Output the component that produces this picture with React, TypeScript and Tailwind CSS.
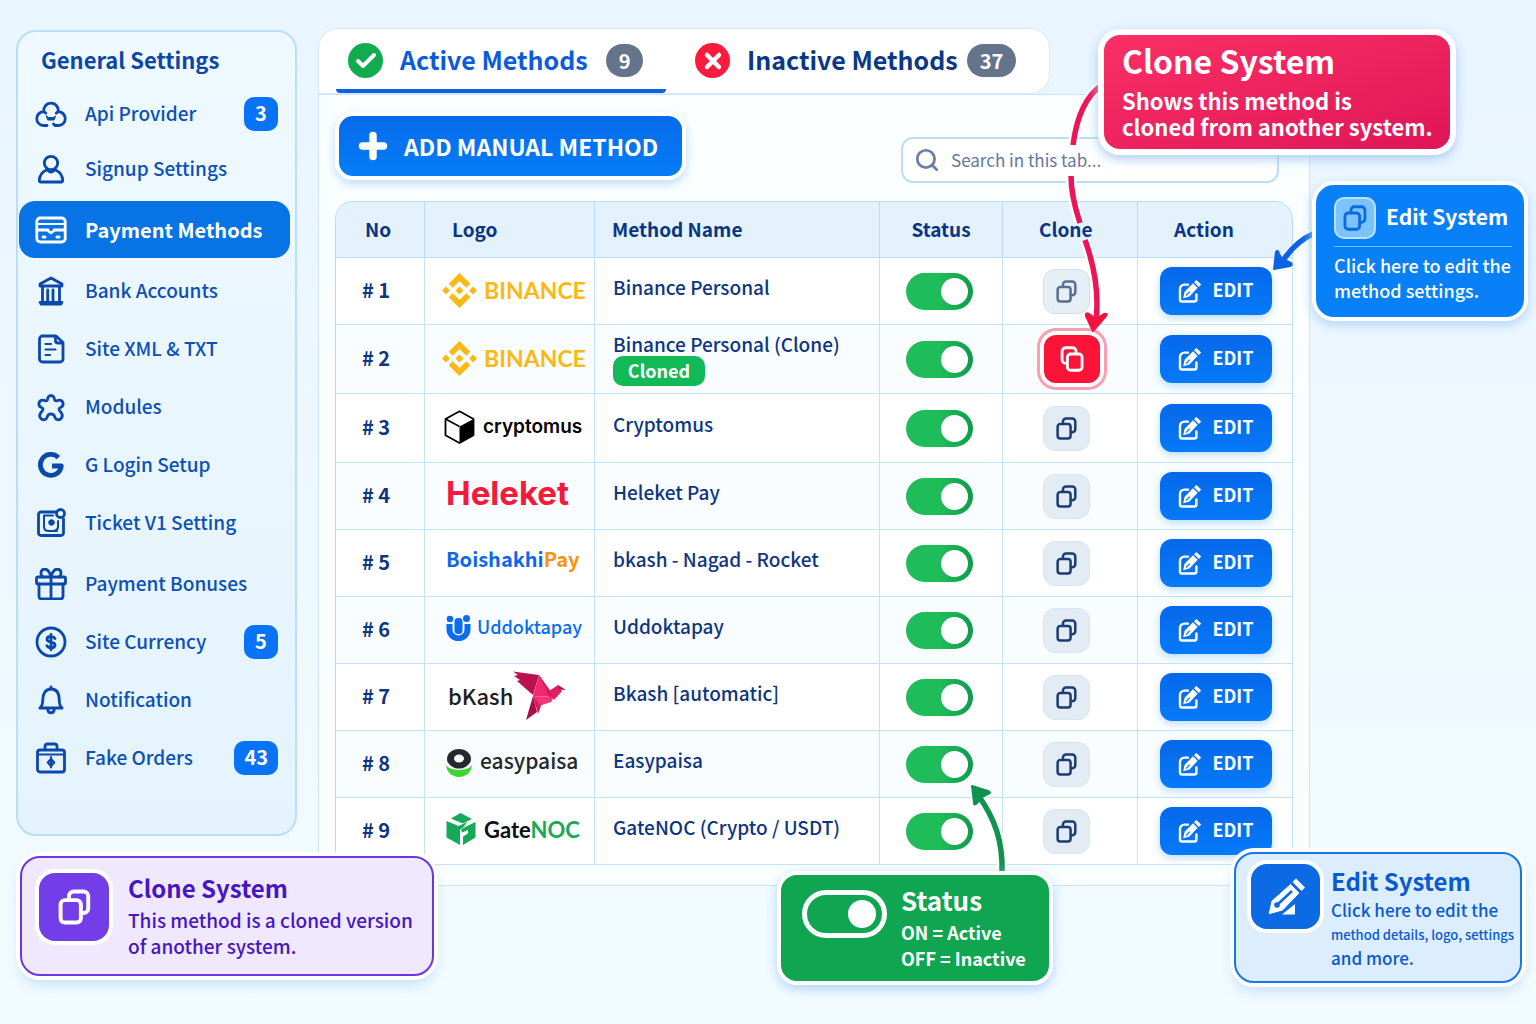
import type { ReactNode } from "react";
import { Search, Check, X, Plus } from "lucide-react";

function CloneIcon(props: { className?: string }) {
  return (
    <svg
      viewBox="0 0 20 22"
      fill="none"
      stroke="currentColor"
      strokeWidth={2.4}
      strokeLinecap="round"
      strokeLinejoin="round"
      className={props.className}
    >
      <rect x="1.5" y="6.8" width="12.4" height="13.7" rx="2.6" />
      <path d="M6.6 6.2V4.4a2.9 2.9 0 0 1 2.9-2.9h6a2.9 2.9 0 0 1 2.9 2.9v7.4a2.9 2.9 0 0 1-2.9 2.9h-1" />
    </svg>
  );
}

function EditIcon() {
  return (
    <svg viewBox="0 0 24 24" fill="none" className="h-6 w-6 shrink-0">
      <path
        d="M10 5.6H6.4A4.4 4.4 0 0 0 2 10v10.500a2 2 0 0 0 2 2h12.400a2 2 0 0 0 2-2v-5"
        stroke="currentColor"
        strokeWidth={2.4}
        strokeLinecap="round"
      />
      <path
        d="M5.200 19.200l1.400-6.400L15 4.300l4.700 4.500-8.200 8.600z"
        fill="currentColor"
      />
      <path d="M16 3.300l2.300-2.400 4.900 4.600-2.300 2.400z" fill="currentColor" />
      <path d="M8 16.600l3.800-3.900" stroke="#0a6ff0" strokeWidth={1.2} />
    </svg>
  );
}

function PencilIcon() {
  return (
    <svg viewBox="0 0 38 38" className="h-[38px] w-[38px]">
      <path d="M15 36.500L28 26v10.500z" fill="#fff" />
      <path
        d="M1 37l3-14L23.500 5.500l9.500 9.500-17.500 18z"
        fill="#fff"
        stroke="#0b6ae4"
        strokeWidth={1}
      />
      <path d="M25.500 4L29 .500 38 9.500l-3.500 3.500z" fill="#fff" />
      <path d="M11 26L25 13" stroke="#0b6ae4" strokeWidth={2.500} />
      <circle cx="10" cy="27" r="2.800" fill="#0b6ae4" />
    </svg>
  );
}

function Outline(props: { children: ReactNode }) {
  return (
    <svg
      viewBox="0 0 32 32"
      fill="none"
      stroke="currentColor"
      strokeWidth={2.800}
      strokeLinecap="round"
      strokeLinejoin="round"
      className="h-8 w-8"
    >
      {props.children}
    </svg>
  );
}

const icons: Record<string, ReactNode> = {
  api: (
    <Outline>
      <path d="M12 27.500H8.500a6.900 6.900 0 0 1 .3-13.800 7.300 7.300 0 1 1 14.400 0 6.900 6.900 0 0 1 .3 13.800H20l-1.500-1.500M8.800 13.700l2 1.500M23.200 13.700l-2 1.500" />
      <path d="M11.500 18l2 1.500h5l2-1.500-1.500 4h-6z" fill="currentColor" strokeWidth={1} />
    </Outline>
  ),
  user: (
    <Outline>
      <circle cx="16" cy="10" r="6.700" />
      <path d="M11.500 17C7 19 4.500 22.500 4.300 27.500a1.400 1.400 0 0 0 1.400 1.500h20.600a1.400 1.400 0 0 0 1.400-1.500C27.500 22.500 25 19 20.500 17M13 17.500c2 2 4 2 6 0" />
    </Outline>
  ),
  card: (
    <Outline>
      <rect x="1.800" y="4" width="28.400" height="24" rx="3.500" />
      <path d="M3 10h26" strokeWidth={1.800} />
      <path d="M3 16h9l4 3 4-3h9M8 16h5M19 16h5" />
      <path d="M8 23h2M22 23h2" strokeWidth={3} />
    </Outline>
  ),
  bank: (
    <Outline>
      <path d="M5 11v-2L16 3l11 6v2zM5 27.500h22M6 29h20M7.500 12v15M12.700 15v11M18 15v11M24.500 12v15" />
    </Outline>
  ),
  file: (
    <Outline>
      <path d="M7.500 3H21l7 6.500V26a3 3 0 0 1-3 3H7.500a3 3 0 0 1-3-3V6a3 3 0 0 1 3-3z" />
      <path d="M20.500 4v3.500a2.500 2.500 0 0 0 2.500 2.500h4" />
      <path d="M10.500 11h5.500M10.500 16.500h10M10.500 22H15" strokeWidth={2.200} />
    </Outline>
  ),
  puzzle: (
    <Outline>
      <path d="M12.500 8.500a3.500 4 0 1 1 7 0c0 1 .8 1.500 2 1.300l2.500-.6a3.700 3.700 0 0 1 2 7c-2 .8-2.500 1.800-1.500 3.300l2 2.700c2.300 3.500-1 7.500-4.600 6.300-1.600-.5-1.900-2-2.500-3.500-.6-1.400-2-2-3.400-2s-2.800.6-3.400 2c-.6 1.500-.9 3-2.500 3.500C6.500 29.700 3.200 25.700 5.500 22.200l2-2.700c1-1.500.5-2.500-1.500-3.300a3.700 3.700 0 0 1 2-7l2.500.6c1.200.2 2-.3 2-1.300z" />
    </Outline>
  ),
  google: (
    <svg viewBox="0 0 32 32" fill="none" className="h-8 w-8">
      <path
        d="M23.400 8.600A10.500 10.500 0 1 0 26.300 17H17"
        stroke="currentColor"
        strokeWidth={4.800}
        strokeLinejoin="round"
      />
    </svg>
  ),
  ticket: (
    <Outline>
      <path d="M21 5H6a2.500 2.500 0 0 0-2.500 2.500V26A2.500 2.500 0 0 0 6 28.500h20a2.500 2.500 0 0 0 2.500-2.500V12" />
      <path d="M18 8.500H9v11c0 3 2 4.500 5 4.500h8M23 14v6c0 2-1 3-3 3.500" strokeWidth={2} />
      <circle cx="16.500" cy="15.500" r="2.800" fill="currentColor" strokeWidth={1} />
      <circle cx="25.500" cy="6.500" r="4" />
    </Outline>
  ),
  gift: (
    <Outline>
      <rect x="1.500" y="9" width="29" height="7" rx="1.500" />
      <path d="M4 16v12.500A2.500 2.500 0 0 0 6.500 31h19a2.500 2.500 0 0 0 2.500-2.500V16M16 9v22" />
      <path d="M16 8.500C14.500 3.500 12 1 9.500 1a3.800 3.800 0 0 0-3.500 4c0 2 1 3.500 2 4M16 8.500C17.500 3.500 20 1 22.500 1A3.800 3.800 0 0 1 26 5c0 2-1 3.500-2 4" />
    </Outline>
  ),
  dollar: (
    <Outline>
      <circle cx="16" cy="16" r="14" />
      <path d="M20 12.500c-1-1.500-2.500-2-4-2-2.300 0-4 1-4 2.800 0 4 8 1.800 8 5.700 0 1.800-1.700 2.800-4 2.800-1.700 0-3.300-.6-4.200-2.200M16 8.300v15.500" />
    </Outline>
  ),
  bell: (
    <Outline>
      <path d="M4.800 24c2-1.500 2.900-3.500 2.900-7.500C7.700 9.500 10.500 5 16 5s8.300 4.500 8.300 11.500c0 4 .9 6 2.900 7.500z" />
      <path d="M16 3v1.500M12.800 25.500c.5 4.500 5.900 4.500 6.400 0" />
    </Outline>
  ),
  bag: (
    <Outline>
      <rect x="2.500" y="8" width="27" height="22" rx="2.500" />
      <path d="M10 7V4.500A2.500 2.500 0 0 1 12.500 2h7A2.500 2.500 0 0 1 22 4.500V7" />
      <path d="M3 12.500h26" strokeWidth={2.200} />
      <path d="M16 17l3.200 3.500L16 24l-3.200-3.500zM16 15v10.500" strokeWidth={2.200} />
    </Outline>
  ),
};

const menuGroups = [
  [
    { icon: "api", label: "Api Provider", badge: 3 },
    { icon: "user", label: "Signup Settings" },
  ],
  [{ icon: "card", label: "Payment Methods", active: true }],
  [
    { icon: "bank", label: "Bank Accounts" },
    { icon: "file", label: "Site XML & TXT" },
    { icon: "puzzle", label: "Modules" },
    { icon: "google", label: "G Login Setup" },
    { icon: "ticket", label: "Ticket V1 Setting" },
  ],
  [
    { icon: "gift", label: "Payment Bonuses" },
    { icon: "dollar", label: "Site Currency", badge: 5 },
    { icon: "bell", label: "Notification" },
    { icon: "bag", label: "Fake Orders", badge: 43 },
  ],
] as { icon: string; label: string; badge?: number; active?: boolean }[][];

function SidebarItem(props: any) {
  const { icon, label, badge, active } = props;

  return (
    <a
      href="#"
      className={
        active
          ? "mr-[5px] flex h-[57px] items-center rounded-2xl bg-[#0873e4] pl-4 pr-3 text-[20px] font-bold text-white"
          : "mr-[5px] flex h-[57px] items-center pl-4 pr-3 text-[19px] font-medium text-[#0b4fb8]"
      }
    >
      <span
        className={
          active
            ? "flex w-8 justify-center text-white"
            : "flex w-8 justify-center text-[#0a48ab]"
        }
      >
        {icons[icon]}
      </span>
      <span className="ml-[18px] flex-1 whitespace-nowrap">{label}</span>
      {badge && (
        <span className="flex h-[34px] min-w-[34px] items-center justify-center rounded-[10px] bg-[#0873f4] px-[10px] pb-[2px] text-[20px] font-bold text-white">
          {badge}
        </span>
      )}
    </a>
  );
}

function Sidebar() {
  return (
    <aside className="mt-[2px] w-[281px] shrink-0 self-start rounded-[20px] border-2 border-[#b9defa] bg-linear-to-b from-[#eff9ff] to-[#e4f3fd] pb-12">
      <h2 className="mt-[11px] ml-[23px] text-[22px] leading-8 font-bold text-[#0a47a9]">
        General Settings
      </h2>
      <nav className="mt-[10px] ml-px flex flex-col gap-1">
        {menuGroups.map((group, i) => (
          <div
            key={i}
            className={
              i === 0 ? "flex flex-col -space-y-[2px]" : "flex flex-col gap-px"
            }
          >
            {group.map((item) => (
              <SidebarItem key={item.label} {...item} />
            ))}
          </div>
        ))}
      </nav>
    </aside>
  );
}

function Binance() {
  return (
    <div className="flex items-center gap-[7px] pb-[2px]">
      <svg viewBox="0 0 126.600 126.600" fill="#fcb813" className="h-[35px] w-[35px]">
        <path d="M38.700 53.200L63.300 28.600 87.900 53.200 102.200 38.900 63.300 0 24.400 38.900zM0 63.300L14.300 49 28.600 63.300 14.300 77.600zM38.700 73.400L63.300 98 87.900 73.400 102.200 87.700 63.300 126.600 24.400 87.700zM98 63.300L112.300 49 126.600 63.300 112.300 77.600zM77.800 63.300L63.300 48.800 48.800 63.300 63.300 77.800z" />
      </svg>
      <span className="font-[Lato] text-[23px] font-bold text-[#fcb813]">
        BINANCE
      </span>
    </div>
  );
}

function Cryptomus() {
  return (
    <div className="flex items-center gap-2 pb-[2px] pl-[2px]">
      <svg viewBox="0 0 31 34" className="h-[34px] w-[31px]">
        <path
          d="M15.500 1.200L29.500 9v16.200L15.500 33 1.500 25.200V9z"
          fill="#fff"
          stroke="#000"
          strokeWidth={1.800}
          strokeLinejoin="round"
        />
        <path d="M15.500 16.500L29.500 9v16.200L15.500 33z" fill="#000" />
        <path d="M1.500 9l14 7.500" stroke="#000" strokeWidth={1.500} />
      </svg>
      <span className="font-[Inter] text-[19px] font-semibold text-black">
        cryptomus
      </span>
    </div>
  );
}

function Uddoktapay() {
  return (
    <div className="flex items-center gap-[6px] pl-1 pb-1">
      <svg viewBox="0 0 25 26" className="h-[26px] w-[25px]" fill="#0a6cf0">
        <circle cx="4" cy="4" r="3.300" />
        <circle cx="20.500" cy="3.500" r="3.500" />
        <path d="M.5 9h6v5.500a6 6 0 0 0 12 0V9h6v5.500a12 11.500 0 0 1-24 0z" />
        <rect x="8.500" y="3" width="8" height="16" rx="3.500" />
      </svg>
      <span className="pb-1 text-[18px] font-medium text-[#0a6cf0]">
        Uddoktapay
      </span>
    </div>
  );
}

function BkashLogo() {
  return (
    <div className="flex items-center pb-[2px] pl-[6px]">
      <span className="pb-[2px] text-[22px] text-[#1c1c22]">bKash</span>
      <svg viewBox="0 0 54 50" className="h-[50px] w-[54px]">
        <path d="M0 .5L26 4 20 24 4 10l3-1-6-4 4-1z" fill="#b9124e" />
        <path d="M26 4l-6 21 21 1z" fill="#f0286f" />
        <path d="M26 4l15 21-3 5z" fill="#d81b60" />
        <path d="M20 25l21 1-3 5-15 5z" fill="#f2357a" />
        <path d="M20 25l4 16-11 8z" fill="#a80f45" />
        <path d="M20 25l5 18 3-8z" fill="#d81b60" />
        <path d="M36 20l9-6 4 6-8 9z" fill="#e01f63" />
        <path d="M45 14l8 5-7-.500z" fill="#b9124e" />
      </svg>
    </div>
  );
}

function EasypaisaLogo() {
  return (
    <div className="flex items-center gap-2 pb-[2px] pl-1">
      <svg viewBox="0 0 26 28" className="h-7 w-[26px]">
        <path
          d="M13 0c7 0 12 4.500 12 10 0 1.500-.6 3-1.200 4H2.200C1.500 13 1 11.500 1 10 1 4.500 6 0 13 0z"
          fill="#25282d"
        />
        <path d="M2.500 14c2 3.500 6 5.500 10.500 5.500s8.500-2 10.500-5.500z" fill="#25282d" />
        <ellipse cx="13" cy="9.500" rx="5" ry="4" fill="#fff" />
        <path
          d="M0 16c4 6.500 22 6.500 26 0-.500 7-6 12-13 12S.500 23 0 16z"
          fill="#3ed62f"
        />
      </svg>
      <span className="pb-1 text-[21px] font-medium text-[#25282d]">
        easypaisa
      </span>
    </div>
  );
}

function GateNocLogo() {
  return (
    <div className="flex items-center gap-2 pl-1 pb-1">
      <svg viewBox="0 0 30 32" className="h-8 w-[30px]" fill="#16a957">
        <path d="M5 5.500L14.500 0 26 6l-9 4.500-4-1.500z" />
        <path d="M.500 8l12 5 9-4-5 6-2.500 1.500V32L.500 24.500z" />
        <path d="M29.500 9v15.500L17 32v-8.500l5-3V17l-6 2.500-1-3 5-3z" />
      </svg>
      <span className="font-[Lato] text-[22px] font-bold text-[#0c0f14]">
        Gate<span className="text-[#16a957]">NOC</span>
      </span>
    </div>
  );
}

const methods = [
  { logo: <Binance />, name: "Binance Personal" },
  { logo: <Binance />, name: "Binance Personal (Clone)", cloned: true },
  { logo: <Cryptomus />, name: "Cryptomus" },
  {
    logo: (
      <div className="pb-1 pl-1 font-[Inter] text-[33px] font-bold text-[#f5193a]">
        Heleket
      </div>
    ),
    name: "Heleket Pay",
  },
  {
    logo: (
      <div className="pb-2 pl-1 text-[20px] font-bold text-[#0d67ee]">
        Boishakhi<span className="text-[#fb9210]">Pay</span>
      </div>
    ),
    name: "bkash - Nagad - Rocket",
  },
  { logo: <Uddoktapay />, name: "Uddoktapay" },
  { logo: <BkashLogo />, name: "Bkash [automatic]" },
  { logo: <EasypaisaLogo />, name: "Easypaisa" },
  { logo: <GateNocLogo />, name: "GateNOC (Crypto / USDT)" },
];

function MethodRow(props: any) {
  const { no, logo, name, cloned } = props;
  const cell = "border-b border-r border-[#c3e3fa] p-0";

  return (
    <tr
      className={
        no === 2 || no === 3
          ? "h-[69px] odd:bg-white even:bg-[#f9fdff]"
          : "h-[67px] odd:bg-white even:bg-[#f9fdff]"
      }
    >
      <td className={cell + " pr-2 pb-[2px] text-center text-[20px] font-bold"}>
        # {no}
      </td>
      <td className={cell + " pl-[17px] whitespace-nowrap"}>{logo}</td>
      <td className={cell + " pl-[18px]"}>
        <div className={cloned ? "leading-6" : "pb-2"}>{name}</div>
        {cloned && (
          <span className="flex h-[30px] w-[92px] items-center justify-center rounded-[10px] bg-[#12b957] pb-[2px] text-[18px] font-bold text-white">
            Cloned
          </span>
        )}
      </td>
      <td className={cell + " pl-[26px]"}>
        <input
          type="checkbox"
          defaultChecked
          aria-label={"Status of " + name}
          className="block h-[37px] w-[67px] appearance-none rounded-full bg-linear-to-r from-[#1fbd5a] from-50% to-[#0f9a4c] before:ml-[35px] before:mt-[5px] before:block before:h-[27px] before:w-[27px] before:rounded-full before:bg-white before:content-['']"
        />
      </td>
      <td className={cell + " pl-10"}>
        {cloned ? (
          <button
            aria-label={"Clone " + name}
            className="-ml-[3px] flex h-14 w-16 items-center justify-center rounded-2xl border-4 border-white bg-[#fb1338] text-white shadow-[0_0_0_3px_#ff9db0]"
          >
            <CloneIcon className="h-[26px] w-6 -scale-x-100" />
          </button>
        ) : (
          <button
            aria-label={"Clone " + name}
            className={
              no === 1
                ? "flex h-[45px] w-[47px] items-center justify-center rounded-xl border border-[#cfdfee] bg-[#e6eef6] text-[#5b6f90]"
                : "flex h-[45px] w-[47px] items-center justify-center rounded-xl border border-[#d8e5f1] bg-[#e3ecf5] text-[#1c3d74]"
            }
          >
            <CloneIcon className="h-[23px] w-[21px]" />
          </button>
        )}
      </td>
      <td className={cell + " pl-[22px]"}>
        <button className="flex h-12 w-28 items-center justify-center gap-[10px] rounded-xl bg-linear-to-b from-[#0668ea] to-[#067af8] text-[18px] font-bold text-white shadow-[0_3px_8px_#b9dcfb]">
          <EditIcon />
          <span className="pb-[3px]">EDIT</span>
        </button>
      </td>
    </tr>
  );
}

function MethodsTable() {
  const head = "border-b border-r border-[#b9dcf8] p-0";

  return (
    <table className="mt-[18px] w-full table-fixed border-separate border-spacing-0 overflow-hidden rounded-t-[18px] border-t border-l border-[#b9dcf8] text-left text-[19px] font-medium text-[#0d3582]">
      <colgroup>
        <col className="w-[89px]" />
        <col className="w-[170px]" />
        <col />
        <col className="w-[123px]" />
        <col className="w-[135px]" />
        <col className="w-[155px]" />
      </colgroup>
      <thead>
        <tr className="h-14 bg-[#e3f2fd] text-[#0a3484]">
          <th className={head + " pr-1 text-center"}>No</th>
          <th className={head + " pl-[27px]"}>Logo</th>
          <th className={head + " pl-[17px]"}>Method Name</th>
          <th className={head + " text-center"}>Status</th>
          <th className={head + " pl-9"}>Clone</th>
          <th className={head + " rounded-tr-[18px] pl-9"}>Action</th>
        </tr>
      </thead>
      <tbody>
        {methods.map((method, i) => (
          <MethodRow key={method.name} no={i + 1} {...method} />
        ))}
      </tbody>
    </table>
  );
}

function Tabs() {
  return (
    <div className="flex h-[66px] w-[732px] max-w-full rounded-[20px] rounded-bl-none border border-[#d5eafb] bg-white pl-[17px]">
      <button className="flex w-[330px] items-center rounded-b-sm border-b-[4px] border-[#0b62e0] pt-[3px] pl-3 text-[25px] font-semibold text-[#0b5bdc]">
        <span className="flex h-[35px] w-[35px] items-center justify-center rounded-full bg-[#12ab50] text-white">
          <Check className="h-6 w-6" strokeWidth={4} />
        </span>
        <span className="ml-[17px] pb-[2px]">Active Methods</span>
        <span className="ml-[18px] rounded-full bg-[#64748b] px-[13px] text-[20px] leading-[33px] font-bold text-white">
          9
        </span>
      </button>
      <button className="ml-[29px] flex items-center border-b-[4px] border-transparent pt-[3px] text-[25px] font-semibold text-[#0b3885]">
        <span className="flex h-[35px] w-[35px] items-center justify-center rounded-full bg-[#fb1b3c] text-white">
          <X className="h-6 w-6" strokeWidth={4.500} />
        </span>
        <span className="ml-[17px] pb-[2px]">Inactive Methods</span>
        <span className="ml-[9px] rounded-full bg-[#64748b] px-[13px] text-[20px] leading-[33px] font-bold text-white">
          37
        </span>
      </button>
    </div>
  );
}

/* Callouts lie over the settings page */
function Callouts() {
  return (
    <>
      {/* Clone arrow, interrupted where it crosses text */}
      <svg
        viewBox="0 0 60 260"
        fill="none"
        className="pointer-events-none absolute top-[80px] right-[426px] h-[260px] w-[60px]"
      >
        <g stroke="#fff" strokeWidth={10}>
          <path d="M52 5C34 17 26 42 23 65" />
          <path d="M21 96c0 18 4 32 9 47M35 160c10 28 14 55 11 80" />
        </g>
        <g stroke="#ec1558" strokeWidth={5.500}>
          <path d="M52 5C34 17 26 42 23 65" />
          <path d="M21 96c0 18 4 32 9 47M35 160c10 28 14 55 11 80" />
        </g>
        <path
          d="M43 251l-7-15q-1-4 3-2l7 5 8-5q4-1 2 2z"
          fill="#f5123f"
          stroke="#f5123f"
          strokeWidth={2}
          strokeLinejoin="round"
        />
      </svg>

      <div className="absolute top-[29px] right-[80px] h-[126px] w-[358px] rounded-[22px] border-[6px] border-white bg-linear-to-br from-[#fb2f66] to-[#e01458] pl-[18px] text-white shadow-[0_4px_12px_#a9cdf2]">
        <h3 className="mt-[3px] text-[32px] leading-[45px] font-bold">Clone System</h3>
        <p className="mt-1 text-[22px] leading-[26px] font-semibold whitespace-nowrap">
          Shows this method is
          <br />
          cloned from another system.
        </p>
      </div>

      {/* Edit */}
      <svg
        viewBox="0 0 44 44"
        fill="none"
        className="pointer-events-none absolute top-[230px] right-[221px] h-11 w-11"
      >
        <path d="M42 4C28 10 19 20 11 32" stroke="#0b62e4" strokeWidth={5.500} />
        <path
          d="M3 39l2-17q2-3 3 2l3 5 7 3q5 2 1 4z"
          fill="#0b62e4"
          stroke="#0b62e4"
          strokeWidth={2}
          strokeLinejoin="round"
        />
      </svg>
      <div className="absolute top-[181px] right-[8px] h-[140px] w-[216px] rounded-[22px] border-4 border-white bg-[#0880f8] pr-3 pl-[18px] text-white shadow-[0_4px_12px_#b0d4f8]">
        <div className="mt-3 flex items-center gap-[10px] border-b border-[#6cc3ff] pb-[7px]">
          <span className="flex h-[42px] w-[42px] shrink-0 items-center justify-center rounded-[10px] border-2 border-[#b8e2ff] bg-[#7cc3fb] text-[#0b6adf]">
            <CloneIcon className="h-[26px] w-6" />
          </span>
          <h3 className="pb-[3px] text-[21px] font-bold whitespace-nowrap">
            Edit System
          </h3>
        </div>
        <p className="mt-[6px] text-[18px] leading-[25px] font-medium whitespace-nowrap">
          Click here to edit the
          <br />
          method settings.
        </p>
      </div>

      {/* Status */}
      <svg
        viewBox="0 0 40 94"
        fill="none"
        className="pointer-events-none absolute top-[781px] right-[528px] h-[94px] w-10"
      >
        <path d="M34 92C35 60 27 38 10 14" stroke="#fff" strokeWidth={10} />
        <path d="M34 92C35 60 27 38 10 14" stroke="#0f9350" strokeWidth={5.500} />
        <path
          d="M4 5l16 5q4 2 0 3l-6 3-5 6q-3 3-3 0z"
          fill="#0f9350"
          stroke="#0f9350"
          strokeWidth={2}
          strokeLinejoin="round"
        />
      </svg>
      <div className="absolute top-[871px] right-[483px] flex h-[114px] w-[276px] gap-[14px] rounded-[20px] border-4 border-white bg-[#0fa551] pt-[9px] pl-[21px] text-white shadow-[0_4px_12px_#b0d4f8]">
        <span className="mt-[6px] flex h-12 w-[85px] items-center justify-end rounded-full border-[5px] border-white pr-[6px]">
          <span className="h-7 w-7 rounded-full bg-white" />
        </span>
        <div>
          <h3 className="text-[26px] leading-8 font-bold">Status</h3>
          <p className="mt-[3px] text-[18px] leading-[26px] font-semibold whitespace-nowrap">
            ON = Active
            <br />
            OFF = Inactive
          </p>
        </div>
      </div>

      {/* Cloned version */}
      <div className="absolute top-[856px] left-[20px] flex h-[120px] w-[414px] gap-[19px] rounded-[20px] border-2 border-[#6a38df] bg-[#f0e8fe] pt-[15px] pl-[17px] text-[#4715c2] shadow-[0_0_0_4px_#fff,0_8px_14px_#c5dff5]">
        <span className="flex h-[68px] w-[70px] shrink-0 items-center justify-center rounded-2xl bg-[#733de8] text-white shadow-[0_0_0_4px_#fff]">
          <CloneIcon className="h-9 w-[33px]" />
        </span>
        <div>
          <h3 className="text-[24px] leading-[30px] font-bold">Clone System</h3>
          <p className="mt-1 text-[19px] leading-[26px] font-medium whitespace-nowrap">
            This method is a cloned version
            <br />
            of another system.
          </p>
        </div>
      </div>

      {/* Edit details */}
      <div className="absolute top-[852px] right-[14px] flex h-[131px] w-[288px] gap-[11px] rounded-[20px] border-2 border-[#1278ea] bg-[#dceefd] pt-[10px] pl-[15px] text-[#0a59d4] shadow-[0_0_0_4px_#fff,0_8px_14px_#c5dff5]">
        <span className="flex h-[65px] w-[69px] shrink-0 items-center justify-center rounded-2xl bg-[#0b6ae4] shadow-[0_0_0_4px_#fff]">
          <PencilIcon />
        </span>
        <div>
          <h3 className="text-[24px] leading-[34px] font-bold">Edit System</h3>
          <p className="text-[17px] leading-[23px] font-medium whitespace-nowrap">
            Click here to edit the
            <br />
            <span className="text-[13px]">method details, logo, settings</span>
            <br />
            and more.
          </p>
        </div>
      </div>
    </>
  );
}

function App() {
  return (
    <div className="relative flex min-h-screen gap-[21px] overflow-hidden bg-linear-to-b from-[#e9f5ff] to-[#f2fbff] pt-7 pl-4 font-['Noto_Sans_CJK_SC','Noto_Sans',sans-serif]">
      <Sidebar />

      <main className="mr-[226px] flex-1">
        <Tabs />
        <section className="border border-[#cbe4fa] bg-[#fafeff] px-4 pt-[17px] pb-5">
          <div className="flex justify-between pr-[14px]">
            <button className="flex h-[68px] items-center gap-[13px] rounded-[18px] border-4 border-white bg-linear-to-b from-[#066bea] to-[#067df8] pr-6 pl-4 text-[23px] font-bold whitespace-nowrap text-white shadow-[0_4px_10px_#c0dcf8]">
              <Plus className="h-9 w-9" strokeWidth={5} />
              ADD MANUAL METHOD
            </button>
            <label className="mt-[25px] flex h-[46px] w-[378px] items-center gap-[11px] rounded-xl border-2 border-[#bcdcf9] bg-white pl-[11px] text-[#6b7fa6]">
              <Search className="h-[26px] w-[26px] shrink-0" strokeWidth={2.500} />
              <input
                type="text"
                aria-label="Search methods"
                placeholder="Search in this tab..."
                className="w-full bg-transparent text-[17px] outline-none placeholder:text-[#64789c]"
              />
            </label>
          </div>
          <MethodsTable />
        </section>
      </main>

      <Callouts />
    </div>
  );
}

export default App;
